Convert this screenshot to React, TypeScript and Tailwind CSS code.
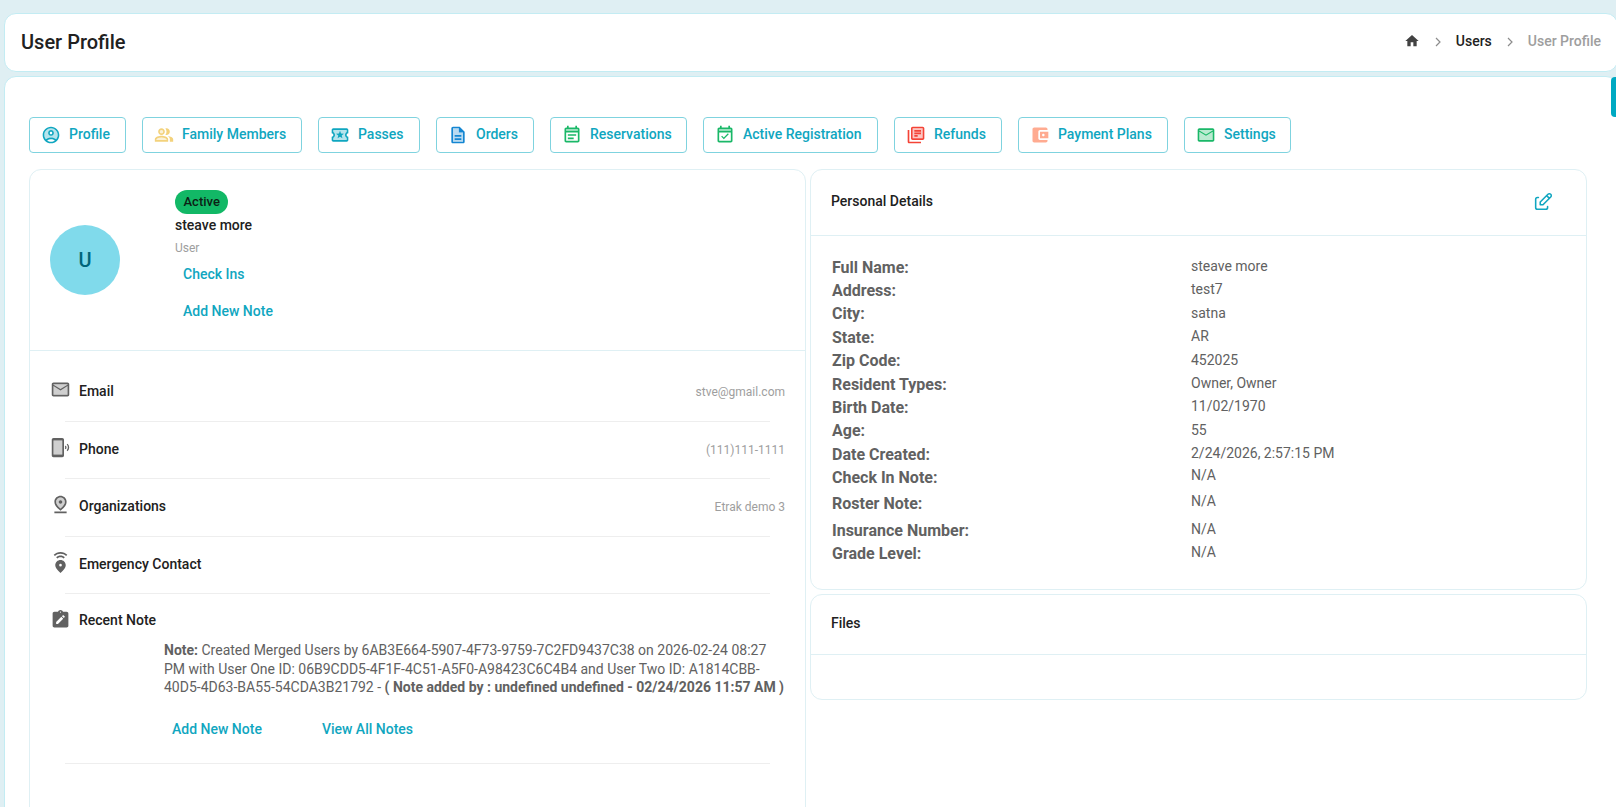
import type { ReactNode } from "react";

type IconProps = { className?: string };

function Svg({ className, children }: IconProps & { children: ReactNode }) {
  return (
    <svg viewBox="0 0 24 24" fill="currentColor" className={`shrink-0 ${className ?? "size-5"}`}>
      {children}
    </svg>
  );
}

const AccountIcon = (p: IconProps) => (
  <Svg {...p}>
    <path opacity=".3" d="M12 4c-4.42 0-8 3.58-8 8 0 1.95.7 3.73 1.86 5.12C7.55 15.8 9.68 15 12 15s4.45.8 6.14 2.12C19.3 15.73 20 13.95 20 12c0-4.42-3.58-8-8-8zm0 9c-1.93 0-3.5-1.57-3.5-3.5S10.07 6 12 6s3.5 1.57 3.5 3.5S13.93 13 12 13z" />
    <path d="M12 2C6.48 2 2 6.48 2 12s4.48 10 10 10 10-4.48 10-10S17.52 2 12 2zM7.35 18.5C8.66 17.56 10.26 17 12 17s3.34.56 4.65 1.5c-1.31.94-2.91 1.5-4.65 1.5s-3.34-.56-4.65-1.5zm10.79-1.38C16.45 15.8 14.32 15 12 15s-4.45.8-6.14 2.12C4.7 15.73 4 13.95 4 12c0-4.42 3.58-8 8-8s8 3.58 8 8c0 1.95-.7 3.73-1.86 5.12z" />
    <path d="M12 6c-1.93 0-3.5 1.57-3.5 3.5S10.07 13 12 13s3.5-1.57 3.5-3.5S13.93 6 12 6zm0 5c-.83 0-1.5-.67-1.5-1.5S11.17 8 12 8s1.5.67 1.5 1.5S12.83 11 12 11z" />
  </Svg>
);

const PeopleIcon = (p: IconProps) => (
  <Svg {...p}>
    <path opacity=".3" d="M9 6a2 2 0 1 0 0 4 2 2 0 0 0 0-4zM9 15c-2.7 0-5.8 1.29-6 2.01V18h12v-1c-.2-.71-3.3-2-6-2z" />
    <path d="M16.67 13.13C18.04 14.06 19 15.32 19 17v3h4v-3c0-2.18-3.57-3.47-6.33-3.87zM15 12c2.21 0 4-1.79 4-4s-1.79-4-4-4c-.47 0-.91.1-1.33.24C14.5 5.27 15 6.58 15 8s-.5 2.73-1.33 3.76c.42.14.86.24 1.33.24zM9 12c2.21 0 4-1.79 4-4s-1.79-4-4-4-4 1.79-4 4 1.79 4 4 4zm0-6c1.1 0 2 .9 2 2s-.9 2-2 2-2-.9-2-2 .9-2 2-2zM9 13c-2.67 0-8 1.34-8 4v3h16v-3c0-2.66-5.33-4-8-4zm6 5H3v-.99C3.2 16.29 6.3 15 9 15s5.8 1.29 6 2v1z" />
  </Svg>
);

const TicketIcon = (p: IconProps) => (
  <Svg {...p}>
    <path opacity=".3" d="M4.01 8.54C5.2 9.23 6 10.52 6 12c0 1.47-.81 2.77-2 3.46V18h16v-2.54c-1.19-.69-2-1.99-2-3.46s.81-2.77 2-3.46V6H4z" />
    <path d="M22 10V6c0-1.11-.9-2-2-2H4c-1.1 0-1.99.89-1.99 2v4c1.1 0 1.99.9 1.99 2s-.89 2-2 2v4c0 1.1.9 2 2 2h16c1.1 0 2-.9 2-2v-4c-1.1 0-2-.9-2-2s.9-2 2-2zm-2-1.46c-1.19.69-2 1.99-2 3.46s.81 2.77 2 3.46V18H4v-2.54c1.19-.69 2-1.99 2-3.46 0-1.48-.8-2.77-1.99-3.46L4 6h16v2.54z" />
    <path d="M9.07 16L12 14.12 14.93 16l-.89-3.36 2.69-2.2-3.47-.21L12 7l-1.27 3.22-3.47.21 2.69 2.2z" />
  </Svg>
);

const DocumentIcon = (p: IconProps) => (
  <Svg {...p}>
    <path opacity=".3" d="M13 4H6v16h12V9h-5z" />
    <path d="M14 2H6c-1.1 0-2 .9-2 2v16c0 1.1.89 2 1.99 2H18c1.1 0 2-.9 2-2V8l-6-6zm4 18H6V4h7v5h5v11zM8 12h8v2H8zm0 4h8v2H8z" />
  </Svg>
);

const CalendarFrame = () => (
  <>
    <path opacity=".3" d="M5 5h14v3H5z" />
    <path d="M19 3h-1V1h-2v2H8V1H6v2H5c-1.11 0-1.99.9-1.99 2L3 19c0 1.1.89 2 2 2h14c1.1 0 2-.9 2-2V5c0-1.1-.9-2-2-2zm0 16H5V9h14v10zm0-12H5V5h14v2z" />
  </>
);

const EventNoteIcon = (p: IconProps) => (
  <Svg {...p}>
    <CalendarFrame />
    <path d="M7 11h10v2H7zm0 4h7v2H7z" />
  </Svg>
);

const EventCheckIcon = (p: IconProps) => (
  <Svg {...p}>
    <CalendarFrame />
    <path d="M16.53 11.06L15.47 10l-4.88 4.88-2.12-2.12-1.06 1.06L10.59 17z" />
  </Svg>
);

const LibraryIcon = (p: IconProps) => (
  <Svg {...p}>
    <path opacity=".3" d="M8 4h12v12H8z" />
    <path d="M4 6H2v14c0 1.1.9 2 2 2h14v-2H4V6zM20 2H8c-1.1 0-2 .9-2 2v12c0 1.1.9 2 2 2h12c1.1 0 2-.9 2-2V4c0-1.1-.9-2-2-2zm0 14H8V4h12v12zM10 9h8v2h-8zm0 3h4v2h-4zm0-6h8v2h-8z" />
  </Svg>
);

const WalletIcon = (p: IconProps) => (
  <Svg {...p}>
    <path d="M21 18v1c0 1.1-.9 2-2 2H5c-1.11 0-2-.9-2-2V5c0-1.1.89-2 2-2h14c1.1 0 2 .9 2 2v1h-9c-1.11 0-2 .9-2 2v8c0 1.1.89 2 2 2h9zm-9-2h10V8H12v8zm4-2.5c-.83 0-1.5-.67-1.5-1.5s.67-1.5 1.5-1.5 1.5.67 1.5 1.5-.67 1.5-1.5 1.5z" />
  </Svg>
);

const MailIcon = (p: IconProps) => (
  <Svg {...p}>
    <path opacity=".3" d="M4 6h16v12H4z" />
    <path d="M20 4H4c-1.1 0-2 .9-2 2v12c0 1.1.9 2 2 2h16c1.1 0 2-.9 2-2V6c0-1.1-.9-2-2-2zm0 2v.5l-8 5-8-5V6h16zM4 18V8l8 5 8-5v10H4z" />
  </Svg>
);

const PhoneIcon = (p: IconProps) => (
  <Svg {...p}>
    <path opacity=".3" d="M4 4h10v16H4z" />
    <path d="M20.1 7.7l-1 1c1.8 1.8 1.8 4.6 0 6.5l1 1c2.5-2.3 2.5-6.1 0-8.5zM18 9.8l-1 1c.5.7.5 1.6 0 2.3l1 1c1.2-1.2 1.2-3 0-4.3zM14 1H4c-1.1 0-2 .9-2 2v18c0 1.1.9 2 2 2h10c1.1 0 2-.9 2-2V3c0-1.1-.9-2-2-2zm0 19H4V4h10v16z" />
  </Svg>
);

const PinIcon = (p: IconProps) => (
  <Svg {...p}>
    <path opacity=".3" d="M12 4c-1.93 0-5 1.4-5 5.15 0 2.15 1.72 4.67 5 7.32 3.28-2.65 5-5.16 5-7.32C17 5.4 13.93 4 12 4z" />
    <path d="M12 4c1.93 0 5 1.4 5 5.15 0 2.16-1.72 4.67-5 7.32-3.28-2.65-5-5.17-5-7.32C7 5.4 10.07 4 12 4m0-2C8.73 2 5 4.46 5 9.15c0 3.12 2.33 6.41 7 9.85 4.67-3.44 7-6.73 7-9.85C19 4.46 15.27 2 12 2zM12 7c-1.1 0-2 .9-2 2s.9 2 2 2 2-.9 2-2-.9-2-2-2zM5 20h14v2H5z" />
  </Svg>
);

const EmergencyIcon = (p: IconProps) => (
  <Svg {...p}>
    <path fillRule="evenodd" d="M12 9c-3.15 0-6 2.41-6 6.15 0 2.49 2 5.44 6 8.85 4-3.41 6-6.36 6-8.85C18 11.41 15.15 9 12 9zm0 7.5a1.5 1.5 0 1 1 0-3 1.5 1.5 0 0 1 0 3z" />
    <path d="M12 4c1.93 0 3.68.78 4.95 2.05l-1.41 1.41C14.63 6.56 13.38 6 12 6s-2.63.56-3.54 1.46L7.05 6.05C8.32 4.78 10.07 4 12 4zM19.78 3.23l-1.41 1.41C16.74 3.01 14.49 2 12.01 2S7.27 3.01 5.64 4.63L4.22 3.22C6.22 1.23 8.97 0 12.01 0s5.79 1.23 7.77 3.23z" />
  </Svg>
);

const NoteIcon = (p: IconProps) => (
  <Svg {...p}>
    <path d="M19 3h-4.18C14.4 1.84 13.3 1 12 1s-2.4.84-2.82 2H5c-1.1 0-2 .9-2 2v14c0 1.1.9 2 2 2h14c1.1 0 2-.9 2-2V5c0-1.1-.9-2-2-2zM9.1 17H7v-2.14l5.96-5.96 2.12 2.12L9.1 17zm7.75-7.73l-1.06 1.06-2.12-2.12 1.06-1.06c.2-.2.51-.2.71 0l1.41 1.41c.2.2.2.51 0 .71zM12 4.25c-.41 0-.75-.34-.75-.75s.34-.75.75-.75.75.34.75.75-.34.75-.75.75z" />
  </Svg>
);

const HomeIcon = (p: IconProps) => (
  <Svg {...p}>
    <path d="M10 20v-6h4v6h5v-8h3L12 3 2 12h3v8z" />
  </Svg>
);

const Chevron = () => (
  <svg viewBox="0 0 6 10" fill="none" stroke="#8c8c8c" strokeWidth="1.2" className="mt-0.5 h-2.5 w-1.5 shrink-0">
    <path d="M1 1l4 4-4 4" />
  </svg>
);

const EditIcon = () => (
  <svg viewBox="0 0 24 24" fill="none" stroke="currentColor" strokeWidth="1.7" strokeLinecap="round" strokeLinejoin="round" className="size-[22px] shrink-0">
    <path d="M7 7H6a2 2 0 0 0-2 2v9a2 2 0 0 0 2 2h9a2 2 0 0 0 2-2v-1" />
    <path d="M20.385 6.585a2.1 2.1 0 0 0-2.97-2.97L9 12v3h3zM16 5l3 3" />
  </svg>
);

const tabs = [
  { label: "Profile", width: "w-[97px]", color: "text-[#10a6c0]", Icon: AccountIcon },
  { label: "Family Members", width: "w-40", color: "text-[#f3d27c]", Icon: PeopleIcon },
  { label: "Passes", width: "w-[102px]", color: "text-[#10a6c0]", Icon: TicketIcon },
  { label: "Orders", width: "w-[98px]", color: "text-[#1486d2]", Icon: DocumentIcon },
  { label: "Reservations", width: "w-[137px]", color: "text-[#1ab868]", Icon: EventNoteIcon },
  { label: "Active Registration", width: "w-[175px]", color: "text-[#1ab868]", Icon: EventCheckIcon },
  { label: "Refunds", width: "w-[108px]", color: "text-[#f44336]", Icon: LibraryIcon },
  { label: "Payment Plans", width: "w-[150px]", color: "text-[#ffab91]", Icon: WalletIcon },
  { label: "Settings", width: "w-[107px]", color: "text-[#1ab868]", Icon: MailIcon },
];

const contacts = [
  { label: "Email", value: "stve@gmail.com", height: "h-[71px] pt-[30px]", Icon: MailIcon },
  { label: "Phone", value: "(111)111-1111", height: "h-[57px] pt-[17px]", Icon: PhoneIcon },
  { label: "Organizations", value: "Etrak demo 3", height: "h-[58px] pt-[17px]", Icon: PinIcon },
  { label: "Emergency Contact", value: "", height: "h-[57px] pt-[17px]", Icon: EmergencyIcon },
];

const details = [
  { label: "Full Name:", value: "steave more", row: "h-[23px]", line: "leading-5" },
  { label: "Address:", value: "test7", row: "h-[23px]", line: "leading-5" },
  { label: "City:", value: "satna", row: "h-6", line: "leading-[22px]" },
  { label: "State:", value: "AR", row: "h-[23px]", line: "leading-5" },
  { label: "Zip Code:", value: "452025", row: "h-6", line: "leading-[22px]" },
  { label: "Resident Types:", value: "Owner, Owner", row: "h-[23px]", line: "leading-5" },
  { label: "Birth Date:", value: "11/02/1970", row: "h-[23px]", line: "leading-5" },
  { label: "Age:", value: "55", row: "h-6", line: "leading-[22px]" },
  { label: "Date Created:", value: "2/24/2026, 2:57:15 PM", row: "h-[23px]", line: "leading-5" },
  { label: "Check In Note:", value: "N/A", row: "h-[26px]", line: "leading-[18px]" },
  { label: "Roster Note:", value: "N/A", row: "h-[27px]", line: "leading-[18px]" },
  { label: "Insurance Number:", value: "N/A", row: "h-[23px]", line: "leading-5" },
  { label: "Grade Level:", value: "N/A", row: "h-[23px]", line: "leading-5" },
];

function Header() {
  return (
    <header className="-mr-0.5 flex h-[59px] shrink-0 items-center justify-between rounded-xl border border-[#c3ecf3] bg-white pr-4 pl-4">
      <h1 className="pb-0.5 text-xl leading-6 font-medium text-[#212121]">User Profile</h1>
      <nav className="flex items-center pb-1 text-sm leading-5 font-medium">
        <HomeIcon className="size-4 text-[#424242]" />
        <span className="w-[15px]" />
        <Chevron />
        <span className="w-[15px]" />
        <a className="text-[#212121]">Users</a>
        <span className="w-[15px]" />
        <Chevron />
        <span className="w-[15px]" />
        <span className="text-[#9e9e9e]">User Profile</span>
      </nav>
    </header>
  );
}

function Tabs() {
  return (
    <div className="flex gap-4">
      {tabs.map(({ label, width, color, Icon }) => (
        <button key={label} className={`flex h-9 items-center rounded border border-[#7fd3df] pl-[11px] text-sm leading-5 font-medium whitespace-nowrap text-[#10a6c0] ${width}`}>
          <Icon className={`size-5 ${color}`} />
          <span className="ml-2 pb-0.5">{label}</span>
        </button>
      ))}
    </div>
  );
}

function Summary() {
  return (
    <section className="flex h-[181px] shrink-0 border-b border-[#dff0f4] pl-5">
      <div className="mt-[55px] flex size-[70px] items-center justify-center rounded-full bg-[#80daeb] text-xl font-medium text-[#00667a]">U</div>
      <div className="ml-[55px] flex flex-col items-start pt-5">
        <span className="flex h-6 items-center rounded-full bg-[#12b866] px-[8.5px] pb-px text-[13px] font-medium text-[#0c1f15]">Active</span>
        <span className="mt-px text-sm leading-5 font-medium text-[#212121]">steave more</span>
        <span className="mt-[3px] text-xs leading-5 text-[#9e9e9e]">User</span>
        <button className="mt-1.5 ml-2 text-sm leading-5 font-medium text-[#10a6c0]">Check Ins</button>
        <button className="mt-[17px] ml-2 text-sm leading-5 font-medium text-[#10a6c0]">Add New Note</button>
      </div>
    </section>
  );
}

function ContactList() {
  return (
    <>
      {contacts.map(({ label, value, height, Icon }) => (
        <section key={label} className={`flex shrink-0 flex-col justify-between pr-5 pl-5 ${height}`}>
          <div className="flex h-5 items-center">
            <Icon className="mb-1 size-[21px] text-[#616161]" />
            <h3 className="ml-2 flex-1 text-sm leading-5 font-medium text-[#212121]">{label}</h3>
            <span className="pt-0.5 text-xs leading-5 text-[#9e9e9e]">{value}</span>
          </div>
          <div className="mr-[15px] ml-[15px] h-px bg-[#eeeeee]" />
        </section>
      ))}
    </>
  );
}

function RecentNote() {
  return (
    <section className="flex shrink-0 flex-col px-5 pt-4">
      <div className="flex h-5 items-center">
        <NoteIcon className="mb-0.5 size-[21px] text-[#616161]" />
        <h3 className="ml-2 text-sm leading-5 font-medium text-[#212121]">Recent Note</h3>
      </div>
      <p className="mt-[11px] ml-[114px] text-sm leading-[18.5px] text-[#616161]">
        <b>Note:</b> Created Merged Users by 6AB3E664-5907-4F73-9759-7C2FD9437C38 on 2026-02-24 08:27
        <br />
        PM with User One ID: 06B9CDD5-4F1F-4C51-A5F0-A98423C6C4B4 and User Two ID: A1814CBB-
        <br />
        <span className="whitespace-nowrap">
          40D5-4D63-BA55-54CDA3B21792 - <b>( Note added by : undefined undefined - 02/24/2026 11:57 AM )</b>
        </span>
      </p>
      <div className="mt-[22px] ml-[122px] flex gap-[60px] text-sm leading-5 font-medium text-[#10a6c0]">
        <button>Add New Note</button>
        <button>View All Notes</button>
      </div>
      <div className="mt-6 mr-[15px] ml-[15px] h-px bg-[#eeeeee]" />
    </section>
  );
}

function PersonalDetails() {
  return (
    <section className="h-[421px] shrink-0 rounded-xl border border-[#dff0f4]">
      <div className="flex h-[66px] items-start justify-between border-b border-[#dff0f4] pt-[21px] pr-8 pl-5">
        <h2 className="text-sm leading-5 font-medium text-[#212121]">Personal Details</h2>
        <button className="text-[#10a6c0]">
          <EditIcon />
        </button>
      </div>
      <dl className="pt-5 pl-[21px] text-[#616161]">
        {details.map(({ label, value, row, line }) => (
          <div key={label} className={`grid grid-cols-[359px_1fr] ${row}`}>
            <dt className="text-base leading-6 font-bold">{label}</dt>
            <dd className={`text-sm ${line}`}>{value}</dd>
          </div>
        ))}
      </dl>
    </section>
  );
}

export default function App() {
  return (
    <div className="relative flex h-[807px] w-[1616px] flex-col gap-1 overflow-hidden bg-[#dfeff3] pt-[13px] pl-1 font-[Roboto,sans-serif]">
      <Header />
      <main className="-mr-0.5 h-[760px] shrink-0 rounded-xl border border-[#c3ecf3] bg-white pt-10 pl-6">
        <Tabs />
        <div className="mt-4 flex gap-1">
          <div className="flex h-[700px] w-[777px] shrink-0 flex-col rounded-xl border border-[#dff0f4]">
            <Summary />
            <ContactList />
            <RecentNote />
          </div>
          <div className="flex w-[777px] shrink-0 flex-col gap-1">
            <PersonalDetails />
            <section className="h-[106px] shrink-0 rounded-xl border border-[#dff0f4]">
              <h2 className="h-[60px] border-b border-[#dff0f4] pt-[18px] pl-5 text-sm leading-5 font-medium text-[#212121]">Files</h2>
            </section>
          </div>
        </div>
      </main>
      <div className="absolute top-[77px] right-0 h-10 w-[5px] rounded-l-sm bg-[#00a9c2]" />
    </div>
  );
}
